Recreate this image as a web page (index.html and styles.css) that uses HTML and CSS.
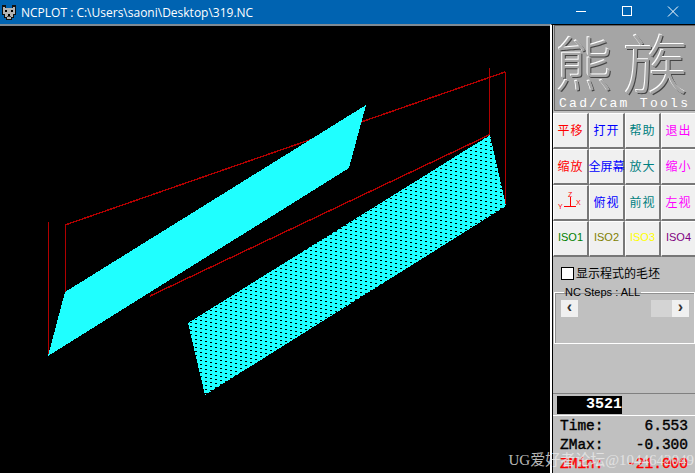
FILE: index.html
```html
<!DOCTYPE html>
<html lang="zh">
<head>
<meta charset="utf-8">
<title>NCPLOT</title>
<link rel="stylesheet" href="styles.css">
</head>
<body>
<div class="window">
  <header class="titlebar">
    <svg class="app-icon" width="16" height="16" viewBox="0 0 16 16" shape-rendering="crispEdges">
      <rect x="1" y="1" width="4" height="4" fill="#111"/><rect x="11" y="1" width="4" height="4" fill="#111"/>
      <path d="M1 4 H15 V11 H13 V14 H11 V16 H5 V14 H3 V11 H1 Z" fill="#111"/>
      <path d="M2 3 H4 V4 H12 V3 H14 V10 H12 V13 H10 V15 H6 V13 H4 V10 H2 Z" fill="#b4b4b4"/>
      <rect x="4" y="6" width="2" height="2" fill="#000"/><rect x="10" y="6" width="2" height="2" fill="#000"/>
      <rect x="7" y="10" width="2" height="2" fill="#000"/><rect x="6" y="12" width="4" height="1" fill="#444"/>
    </svg>
    <span class="title-text">NCPLOT : C:\Users\saoni\Desktop\319.NC</span>
    <div class="win-controls">
      <svg class="win-btn" width="46" height="24" viewBox="0 0 46 24"><path d="M18 11.5 H28" stroke="#fff"/></svg>
      <svg class="win-btn" width="46" height="24" viewBox="0 0 46 24"><rect x="18.5" y="6.5" width="9" height="9" fill="none" stroke="#fff"/></svg>
      <svg class="win-btn" width="46" height="24" viewBox="0 0 46 24"><path d="M18 6.5 L28 16.5 M28 6.5 L18 16.5" stroke="#fff"/></svg>
    </div>
  </header>
  <main class="body">
    <div class="viewport">
      <svg class="plot" width="550" height="447" viewBox="0 26 550 447" shape-rendering="crispEdges">
        <defs>
          <pattern id="hatch" width="20" height="4" patternUnits="userSpaceOnUse">
            <rect width="20" height="4" fill="#1fffff"/>
            <rect x="0" y="0" width="2" height="1" fill="#000"/>
            <rect x="5" y="1" width="2" height="1" fill="#000"/>
            <rect x="10" y="2" width="2" height="1" fill="#000"/>
            <rect x="15" y="3" width="2" height="1" fill="#000"/>
          </pattern>
        </defs>
        <g class="red-lines">
          <rect class="vert" x="48" y="222" width="1" height="134"/>
          <rect class="vert" x="65" y="225" width="1" height="67"/>
          <path d="M65 225 L505 72"/>
          <rect class="vert" x="505" y="72" width="1" height="134"/>
          <rect class="vert" x="489" y="68" width="1" height="67"/>
          <path d="M489 135 L150 296"/>
        </g>
        <polygon points="48,356 65,292 366,105 349,168" fill="#1fffff"/>
        <polygon points="188,323 490,135 506,206 205,395" fill="url(#hatch)"/>
      </svg>
    </div>
    <aside class="panel">
      <div class="logo">
        <div class="logo-glyphs"><span>熊</span><span class="logo-second">族</span></div>
        <div class="logo-sub">Cad/Cam Tools</div>
      </div>
      <div class="tools">
        <button class="tool red">平移</button>
        <button class="tool blue">打开</button>
        <button class="tool teal">帮助</button>
        <button class="tool magenta">退出</button>
        <button class="tool red">缩放</button>
        <button class="tool blue tight">全屏幕</button>
        <button class="tool teal">放大</button>
        <button class="tool magenta">缩小</button>
        <button class="tool red">
          <svg width="30" height="20" viewBox="0 0 30 20" class="axes">
            <path d="M14.5 5 V14.5 H8 M14.5 14.5 H20" fill="none" stroke="#f00" shape-rendering="crispEdges"/>
            <text x="12" y="5" class="axis-label">Z</text>
            <text x="2" y="17" class="axis-label">Y</text>
            <text x="20" y="13" class="axis-label">X</text>
          </svg>
        </button>
        <button class="tool blue">俯视</button>
        <button class="tool teal">前视</button>
        <button class="tool magenta">左视</button>
        <button class="tool iso green">ISO1</button>
        <button class="tool iso olive">ISO2</button>
        <button class="tool iso yellow">ISO3</button>
        <button class="tool iso purple">ISO4</button>
      </div>
      <label class="stock"><span class="check"></span>显示程式的毛坯</label>
      <fieldset class="steps">
        <legend>NC Steps : ALL</legend>
        <div class="scrollbar">
          <span class="arrow">‹</span>
          <span class="thumb"></span>
          <span class="track"></span>
          <span class="arrow">›</span>
        </div>
      </fieldset>
      <div class="spacer"></div>
      <div class="counter-row"><div class="counter">3521</div></div>
      <div class="stats">
        <div class="stat"><span>Time:</span><span>6.553</span></div>
        <div class="stat"><span>ZMax:</span><span>-0.300</span></div>
        <div class="stat min"><span>ZMin:</span><span>-21.000</span></div>
      </div>
    </aside>
  </main>
  <div class="watermark">UG爱好者论坛@1044642049</div>
</div>
</body>
</html>
```
FILE: styles.css
```css
* { box-sizing: border-box; }
html, body { margin: 0; padding: 0; background: #000; }
.window { position: relative; width: 695px; height: 473px; overflow: hidden; display: flex; flex-direction: column; }
.titlebar { height: 24px; background: #0063b1; color: #fff; display: flex; align-items: center; padding-left: 1px; flex: none; }
.app-icon { flex: none; margin-right: 4px; }
.title-text { font: 12px "Open Sans", "Noto Sans", sans-serif; white-space: nowrap; }
.win-controls { margin-left: auto; display: flex; margin-right: -1px; }
.win-btn { display: block; }
.body { flex: 1; display: flex; min-height: 0; }
.viewport { width: 550px; flex: none; background: #000; border-top: 2px solid #7f8a94; overflow: hidden; }
.plot { display: block; }
.red-lines path { stroke: #b00000; stroke-width: 1.4; fill: none; }
.red-lines rect.vert { fill: #b00000; }
.panel { width: 145px; flex: none; background: #c0c0c0; border-left: 2px solid #fff; border-top: 1px solid #000; display: flex; flex-direction: column; box-shadow: inset 1px 0 0 #000; padding-left: 1px; }
.logo { height: 86px; background: #a5a5a5; margin-left: 1px; border: 1px solid #666; border-right: 0; display: flex; flex-direction: column; }
.logo-glyphs { display: flex; align-items: center; height: 70px; gap: 10px; font: 300 58px/70px "Noto Sans CJK SC", sans-serif; color: #a5a5a5; text-shadow: -1px -1px 0 #fff, 1px 1px 0 #444; }
.logo-second { font-size: 65px; }
.logo-sub { font: 13px/15px "Liberation Mono", monospace; letter-spacing: 2.3px; color: #fff; padding-left: 4px; white-space: nowrap; }
.tools { display: grid; grid-template-columns: repeat(4, 36px); grid-auto-rows: 36px; margin-top: 2px; }
.tool { background: #f0f0f0; border: 1px solid #fff; border-right: 2px solid #777; border-bottom: 2px solid #777; padding: 0 0 2px; font: 12px/1 "Noto Sans CJK SC", sans-serif; letter-spacing: 1px; display: flex; align-items: center; justify-content: center; white-space: nowrap; }
.tight { letter-spacing: 0; }
.iso { font-family: "Liberation Sans", sans-serif; font-size: 11px; letter-spacing: 0; }
.red { color: #f00; } .blue { color: #00f; } .teal { color: #008080; } .magenta { color: #f0f; }
.green { color: #008000; } .olive { color: #808000; } .yellow { color: #ff0; } .purple { color: #800080; }
.axis-label { font: 7px "Liberation Sans", sans-serif; fill: #f00; }
.stock { display: flex; align-items: center; height: 18px; margin: 7px 0 0 8px; font: 12px/18px "Noto Sans CJK SC", sans-serif; color: #000; }
.check { width: 13px; height: 13px; background: #fff; border: 1px solid #000; margin-right: 2px; flex: none; }
.steps { margin: 4px 0 0 1px; padding: 2px 5px 0 6px; height: 58px; border: 1px solid #fff; box-shadow: inset 1px 1px 0 #909090; min-width: 0; }
.steps legend { font: 11px/12px "Liberation Sans", sans-serif; color: #000; padding: 0 1px; margin-left: 3px; }
.scrollbar { height: 17px; display: flex; background: #fff; }
.arrow { width: 17px; flex: none; background: #f0f0f0; font: bold 16px/14px "Liberation Sans", sans-serif; color: #333; text-align: center; }
.thumb { width: 73px; background: #c0c0c0; }
.track { flex: 1; background: #d4d4d4; }
.spacer { flex: 1; }
.counter-row { height: 23px; border-top: 1px solid #808080; border-bottom: 1px solid #fff; padding: 2px 0 0 4px; flex: none; }
.counter { width: 65px; height: 18px; background: #000; color: #fff; font: bold 15px/18px "Liberation Mono", monospace; text-align: right; }
.stats { flex: none; padding: 1px 7px 0 7px; height: 57px; display: flex; flex-direction: column; }
.stat { display: flex; justify-content: space-between; font: 14.5px/19px "Liberation Mono", monospace; color: #000; -webkit-text-stroke: 0.4px currentColor; }
.stat.min { color: #f00; }
.watermark { position: absolute; right: 1px; bottom: 4px; font: 15px/18px "Liberation Serif", "Noto Sans CJK SC", serif; color: rgba(235,235,235,.8); white-space: nowrap; }
```
